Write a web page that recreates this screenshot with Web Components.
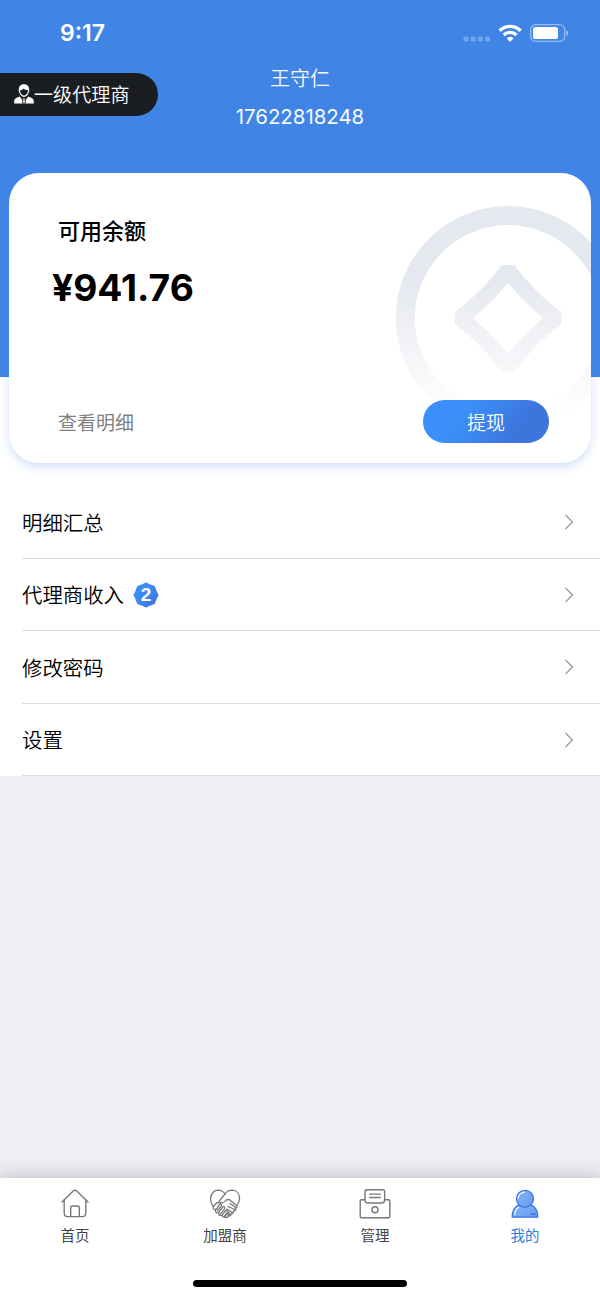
<!DOCTYPE html>
<html lang="zh-CN">
<head>
<meta charset="utf-8">
<meta name="viewport" content="width=device-width, initial-scale=1">
<title>我的</title>
<style>
    :root{
        --blue: #4085e6;
        --gray: #efeef4;
        --line: #dcdcde;
    }
    body{
        margin: 0;
        font-family: Inter, "Noto Sans CJK SC", sans-serif;
        color: #000;
    }
</style>
</head>
<body>
<profile-view></profile-view>
<script>
class StatusBar extends HTMLElement{
    constructor(){
        super();
        this.attachShadow({ mode: "open" });
    }

    connectedCallback(){
        this.shadowRoot.innerHTML = `
        <style>
            :host{
                display: flex;
                justify-content: space-between;
                align-items: center;
                height: 66px;
                padding: 0 31px 0 60px;
                box-sizing: border-box;
                color: #fff;
            }
            .time{
                font-size: 23px;
                font-weight: 600;
                line-height: 26px;
            }
            svg{
                display: block;
            }
        </style>
        <span class="time"><slot></slot></span>
        <svg width="106" height="24" viewBox="463 21 106 24">
            <g fill="#fff" opacity=".27">
                <rect x="463.500" y="36.500" width="5" height="5" rx="1.500"/>
                <rect x="470.700" y="36.500" width="5" height="5" rx="1.500"/>
                <rect x="477.900" y="36.500" width="5" height="5" rx="1.500"/>
                <rect x="485.100" y="36.500" width="5" height="5" rx="1.500"/>
            </g>
            <g fill="none" stroke="#fff" stroke-width="3.300">
                <path d="M499.600 30.700a15 15 0 0 1 21 0"/>
                <path d="M503.700 35a9.200 9.200 0 0 1 12.800 0"/>
            </g>
            <path d="M506.600 38.300a5.200 5.200 0 0 1 7 0l-3.500 3.500z" fill="#fff"/>
            <rect x="530.700" y="24.700" width="34" height="16.600" rx="4.800" fill="none" stroke="#fff" stroke-opacity=".45" stroke-width="1.300"/>
            <rect x="533" y="27" width="25" height="12" rx="2.600" fill="#fff"/>
            <path d="M566.300 30.300v5.600q1.900-.8 1.900-2.800t-1.900-2.800z" fill="#fff" opacity=".5"/>
        </svg>
        `;
    }
}
customElements.define("status-bar", StatusBar);

class LevelBadge extends HTMLElement{
    constructor(){
        super();
        this.attachShadow({ mode: "open" });
    }

    connectedCallback(){
        this.shadowRoot.innerHTML = `
        <style>
            :host{
                display: flex;
                align-items: center;
                width: 158px;
                height: 43px;
                padding: 0 0 1px 14px;
                box-sizing: border-box;
                border-radius: 0 22px 22px 0;
                background: #1a1e22;
                color: #fff;
                font-size: 19.1px;
                font-weight: 350;
                white-space: nowrap;
            }
            svg{
                flex: none;
            }
        </style>
        <svg width="20" height="20" viewBox="0 0 20 20">
            <path d="M10 .2C6.600.2 4.600 2.500 4.800 5.800c0 .8-.3 1.800.4 2.300.5 2.800 2.500 4.900 4.800 4.900s4.300-2.100 4.800-4.900c.7-.5.4-1.500.4-2.300C15.400 2.500 13.400.2 10 .2z" fill="#fff"/>
            <path d="M6 6.300c1.700 0 2.800-.8 3.400-1.900 1.200 1.300 2.800 1.600 4.600 1.700-.1 3.200-1.800 5.500-4 5.500S6.100 9.400 6 6.300z" fill="#1a1e22"/>
            <path d="M5.800 12.400C3 13.600.2 14 .2 17.500v2.100h19.600v-2.100c0-3.500-2.800-3.900-5.600-5.100L10 18.400z" fill="#fff"/>
            <path d="M8.600 14.100h2.800l-.5 1.600.7 3.300H8.400l.7-3.300z" fill="#fff" stroke="#1a1e22" stroke-width=".8"/>
        </svg>
        <slot></slot>
        `;
    }
}
customElements.define("level-badge", LevelBadge);

class BalanceCard extends HTMLElement{
    constructor(){
        super();
        this.attachShadow({ mode: "open" });
    }

    connectedCallback(){
        this.shadowRoot.innerHTML = `
        <style>
            :host{
                position: relative;
                display: flex;
                flex-direction: column;
                height: 290.500px;
                padding: 42px 42px 20px 49px;
                box-sizing: border-box;
                border-radius: 30px;
                background: #fff;
                box-shadow: 0 4px 10px rgba(64, 120, 230, .24);
                overflow: hidden;
            }
            .coin{
                position: absolute;
                top: 33px;
                right: 0;
            }
            .title{
                font-size: 22px;
                font-weight: 500;
                line-height: 32px;
            }
            .amount{
                margin: 19px 0 0 -6px;
                font-size: 37.200px;
                font-weight: 700;
                line-height: 44px;
            }
            .foot{
                position: relative;
                display: flex;
                justify-content: space-between;
                align-items: center;
                margin-top: auto;
            }
            .detail{
                color: #808080;
                font-size: 19px;
            }
            button{
                width: 126px;
                height: 43px;
                padding: 0;
                border: 0;
                border-radius: 22px;
                background: linear-gradient(125deg, #3a90f8 32%, #3d75dd 75%);
                color: #fff;
                font: inherit;
                font-size: 19px;
                font-weight: 350;
            }
        </style>
        <svg class="coin" width="195" height="224" viewBox="396 206 195 224">
            <linearGradient id="fade" gradientUnits="userSpaceOnUse" x1="0" y1="206" x2="0" y2="416">
                <stop offset="0" stop-color="#e4e8ef"/>
                <stop offset=".36" stop-color="#e5e8ef"/>
                <stop offset=".78" stop-color="#f7f8fa"/>
                <stop offset="1" stop-color="#fff"/>
            </linearGradient>
            <circle cx="508" cy="318.300" r="102.700" fill="none" stroke="url(#fade)" stroke-width="19"/>
            <path fill="url(#fade)" fill-rule="evenodd" d="M501.600 264.900h13q19.500 27.400 46.800 47v12.600q-27.300 19.800-46.800 47h-13q-19.500-27.200-46.800-47v-12.600q27.300-19.600 46.800-47z
                M508.100 283q-16 19.300-35 35.200 19 16.100 35 35.200 16-19.100 35-35.200-19-15.900-35-35.200z"/>
        </svg>
        <div class="title"><slot name="title"></slot></div>
        <div class="amount"><slot></slot></div>
        <div class="foot">
            <span class="detail"><slot name="detail"></slot></span>
            <button><slot name="action"></slot></button>
        </div>
        `;
    }
}
customElements.define("balance-card", BalanceCard);

class MenuRow extends HTMLElement{
    constructor(){
        super();
        this.attachShadow({ mode: "open" });
    }

    connectedCallback(){
        this.shadowRoot.innerHTML = `
        <style>
            :host{
                display: flex;
                align-items: center;
                gap: 9px;
                margin-left: 22px;
                padding: 1px 26px 0 0;
                border-bottom: 1px solid var(--line);
                font-size: 20.400px;
                font-weight: 350;
                line-height: 30px;
            }
            .label{
                padding-top: 3px;
            }
            .arrow{
                margin-left: auto;
            }
        </style>
        <span class="label"><slot></slot></span>
        <slot name="badge"></slot>
        <svg class="arrow" width="10" height="16" viewBox="0 0 10 16">
            <path d="M1.500 1l7 7-7 7" fill="none" stroke="#979797" stroke-width="1.200"/>
        </svg>
        `;
    }
}
customElements.define("menu-row", MenuRow);

class CountBadge extends HTMLElement{
    constructor(){
        super();
        this.attachShadow({ mode: "open" });
    }

    connectedCallback(){
        this.shadowRoot.innerHTML = `
        <style>
            :host{
                display: grid;
                place-items: center;
                width: 26px;
                height: 26px;
                color: #fff;
                font: 700 19px/26px "Liberation Sans", sans-serif;
            }
            svg, span{
                grid-area: 1 / 1;
            }
        </style>
        <svg width="26" height="26" viewBox="0 0 26 26">
            <linearGradient id="fill" x1="0" y1="0" x2="1" y2="1">
                <stop offset=".3" stop-color="#3b8df4"/>
                <stop offset="1" stop-color="#3d74dd"/>
            </linearGradient>
            <path d="M13 1.300l3.700 1.800 4.500 1.700 1.700 4.500L24.700 13l-1.800 3.700-1.700 4.500-4.500 1.700L13 24.700l-3.700-1.800-4.500-1.700-1.700-4.500L1.300 13l1.800-3.700 1.700-4.500 4.500-1.700z"
                fill="url(#fill)" stroke="url(#fill)" stroke-width="1.600" stroke-linejoin="round"/>
        </svg>
        <span><slot></slot></span>
        `;
    }
}
customElements.define("count-badge", CountBadge);

const icons = {
    home: `
        <g fill="none" stroke="#777" stroke-width="1.400" stroke-linecap="round" stroke-linejoin="round">
            <path d="M4 14L15.200 3.100q1.800-1.700 3.600 0L30 14"/>
            <path d="M6.200 12v13q0 3.600 3.600 3.600h14.400q3.600 0 3.600-3.600V12"/>
            <path d="M12.700 28.600v-8.800q0-1.800 1.800-1.800h5q1.800 0 1.800 1.800v8.800"/>
        </g>`,
    partner: `
        <g fill="none" stroke="#777" stroke-width="1.300" stroke-linecap="round" stroke-linejoin="round">
            <path d="M5.200 18.500Q2.600 15.200 2.500 10.500C2.800 5.500 6 2.200 10.300 2.200q4.400.2 6.700 3.800 2.300-3.600 7-3.800c4.600.2 7.600 3.600 7.600 8.300q-.2 3.300-2.300 6.500"/>
            <path d="M17 6l-5.800 7.200c.3 2.600 4.800 2 7-1.200l2.600-.7 8.100 6.500q.6 1.900-1.400 2.700.6 2.200-2 2.600.2 2.500-2.300 2.500-.3 2.300-2.400 2.300"/>
            <path d="M11 14.500L8.500 15 5.300 18.600q-.9 2.300 1.500 3 2 .2 4.500-5 1.600-1.600 2.300 0 .4 1.300-4 5.900"/>
            <path d="M8 21.500q-1.400 2.400 1 3.400 2 .2 5.500-5.800 1.700-1 2.200.5.100 1.800-4.400 6.400"/>
            <path d="M11 25q-.8 2.500 1.500 2.600 2 0 4.800-5 1.600-1 2 .5.100 1.800-3.200 5.400"/>
            <path d="M14.300 27.700q.3 1.700 2.200 1.500l2.400-3.300q1.500-.6 1.600.9 0 2.500-2.600 2.900-1.500 0-1.900-.7"/>
            <path d="M20 18.500l6.600 3M18.700 21l5.500 3.500M22 15.500l6 4.200M20 24l2.400 2.600"/>
        </g>`,
    manage: `
        <g fill="none" stroke="#777" stroke-width="1.400" stroke-linejoin="round">
            <path d="M7 11.800H3.400q-1.200 0-1.200 1.200v15.600q0 1.200 1.200 1.200h27.200q1.200 0 1.200-1.200V13q0-1.200-1.200-1.200H27"/>
            <path d="M9 1.700h16q1.600 0 1.600 1.600v8.700q0 3-3 3H10q-3 0-3-3V3.300q0-1.600 2-1.600z"/>
            <path d="M11.200 6.100h11.600M11.200 9.500h11.600"/>
            <circle cx="17" cy="21.700" r="3"/>
        </g>`,
    mine: `
        <linearGradient id="body" x1="0" y1="0" x2="1" y2="1">
            <stop offset="0" stop-color="#86b7fa"/>
            <stop offset="1" stop-color="#6799ed"/>
        </linearGradient>
        <g stroke="#3975e6" stroke-width="1.300" stroke-linejoin="round">
            <path d="M10.500 17.200C6.200 19.200 4.200 23 4.200 29.200h25.600c0-6.200-2-10-6.300-12z" fill="url(#body)"/>
            <circle cx="17" cy="10.800" r="8.500" fill="url(#body)"/>
        </g>
        <path d="M6.700 26.800q.3-5.300 3.800-7.500M10.200 10.300q.6-5.500 6.300-6.300" fill="none" stroke="#fff" stroke-width="1.200" stroke-linecap="round"/>
        <path d="M22.500 26h5" stroke="#3975e6" stroke-width="1.600"/>`
};

class TabItem extends HTMLElement{
    constructor(){
        super();
        this.attachShadow({ mode: "open" });
    }

    connectedCallback(){
        this.shadowRoot.innerHTML = `
        <style>
            :host{
                display: flex;
                flex: 1;
                flex-direction: column;
                align-items: center;
                gap: 5px;
                color: #444;
                font-size: 14.500px;
                line-height: 22px;
            }
            :host([active]){
                color: #2a80e0;
            }
        </style>
        <svg width="34" height="32" viewBox="0 0 34 32">${icons[this.getAttribute("icon")]}</svg>
        <span><slot></slot></span>
        `;
    }
}
customElements.define("tab-item", TabItem);

class TabBar extends HTMLElement{
    constructor(){
        super();
        this.attachShadow({ mode: "open" });
    }

    connectedCallback(){
        this.shadowRoot.innerHTML = `
        <style>
            :host{
                display: flex;
                flex-direction: column;
                justify-content: space-between;
                align-items: center;
                height: 121px;
                padding: 9.500px 0 12px;
                box-sizing: border-box;
                background: #fff;
                box-shadow: 0 -2px 16px rgba(90, 100, 120, .34);
            }
            nav{
                display: flex;
                width: 100%;
            }
            .indicator{
                width: 214px;
                height: 7px;
                border-radius: 4px;
                background: #000;
            }
        </style>
        <nav><slot></slot></nav>
        <div class="indicator"></div>
        `;
    }
}
customElements.define("tab-bar", TabBar);

class ProfileView extends HTMLElement{
    constructor(){
        super();
        this.attachShadow({ mode: "open" });
    }

    connectedCallback(){
        this.render();
    }

    render(){
        this.shadowRoot.innerHTML = `
        <style>
            :host{
                display: flex;
                flex-direction: column;
                height: 1299px;
                overflow: hidden;
                background: var(--gray);
            }
            /* the blue ends behind the card */
            .top{
                height: 486px;
                background: linear-gradient(var(--blue) 377px, #fff 377px);
            }
            .user{
                display: grid;
                grid-template-columns: 158px 1fr 158px;
                height: 106.500px;
                color: #fff;
            }
            level-badge{
                margin-top: 6.500px;
            }
            .who{
                text-align: center;
                font-size: 20px;
                font-weight: 350;
                line-height: 26px;
                opacity: .96;
            }
            .phone{
                margin-top: 7px;
                font-size: 20.400px;
                font-weight: 400;
                line-height: 36px;
            }
            balance-card{
                margin: 0 9px;
            }
            .menu{
                display: grid;
                grid-template-rows: repeat(4, 1fr);
                height: 290px;
                background: #fff;
            }
            tab-bar{
                margin-top: auto;
            }
        </style>
        <div class="top">
            <status-bar>9:17</status-bar>
            <div class="user">
                <level-badge>一级代理商</level-badge>
                <div class="who">
                    <div>王守仁</div>
                    <div class="phone">17622818248</div>
                </div>
            </div>
            <balance-card>
                <span slot="title">可用余额</span>
                ¥941.76
                <span slot="detail">查看明细</span>
                <span slot="action">提现</span>
            </balance-card>
        </div>
        <div class="menu">
            <menu-row>明细汇总</menu-row>
            <menu-row>代理商收入<count-badge slot="badge">2</count-badge></menu-row>
            <menu-row>修改密码</menu-row>
            <menu-row>设置</menu-row>
        </div>
        <tab-bar>
            <tab-item icon="home">首页</tab-item>
            <tab-item icon="partner">加盟商</tab-item>
            <tab-item icon="manage">管理</tab-item>
            <tab-item icon="mine" active>我的</tab-item>
        </tab-bar>
        `;
    }
}
customElements.define("profile-view", ProfileView);
</script>
</body>
</html>
